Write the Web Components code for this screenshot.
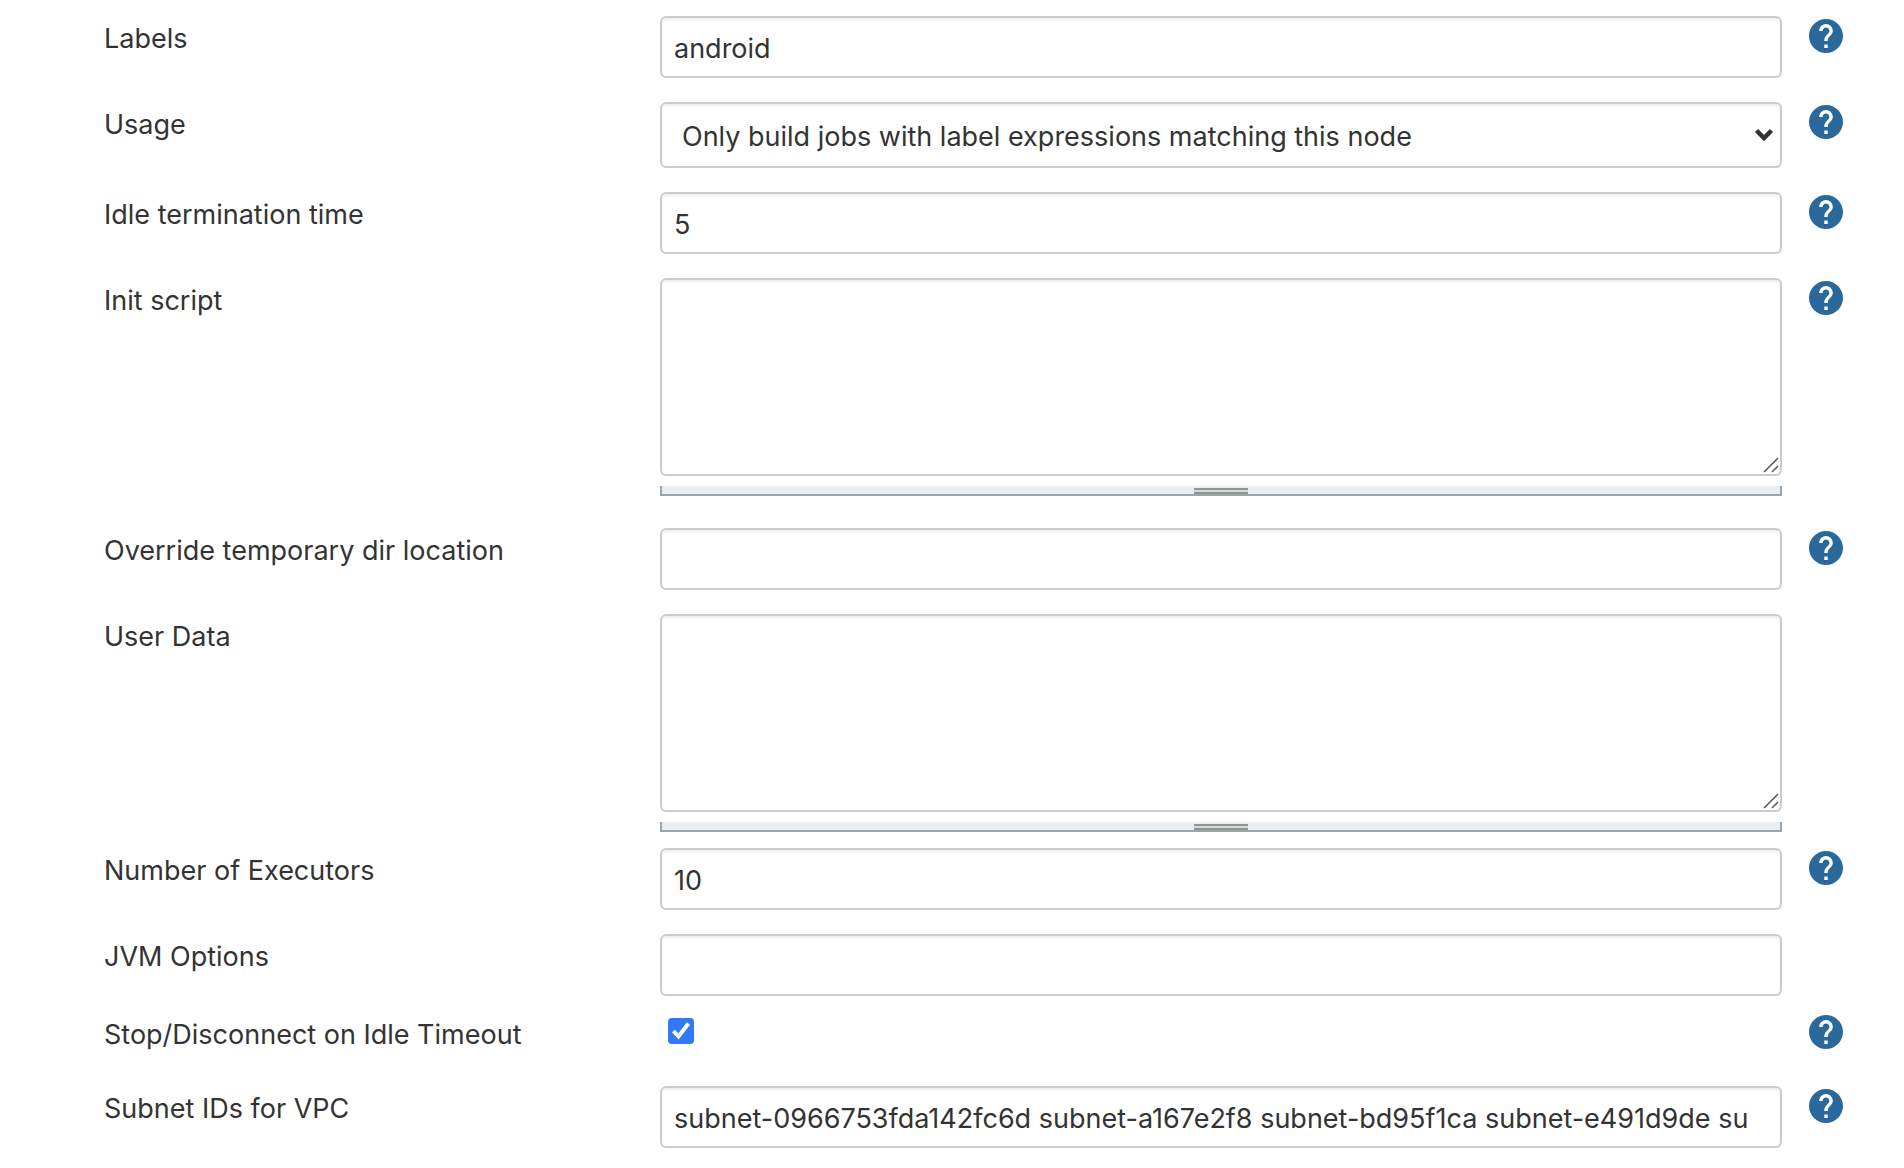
<!DOCTYPE html>
<html lang="en">
<head>
<meta charset="utf-8">
<title>Node configuration</title>
<style>
  body { margin: 0; background: #fff; color: #333; font: 27px/40px Inter, "Liberation Sans", sans-serif; }
</style>
</head>
<body>
<config-form>
  <text-row value="android" help>Labels</text-row>
  <select-row value="Only build jobs with label expressions matching this node" help>Usage</select-row>
  <text-row value="5" help>Idle termination time</text-row>
  <area-row help spaced>Init script</area-row>
  <text-row help>Override temporary dir location</text-row>
  <area-row>User Data</area-row>
  <text-row value="10" help>Number of Executors</text-row>
  <text-row tight>JVM Options</text-row>
  <check-row checked help>Stop/Disconnect on Idle Timeout</check-row>
  <text-row value="subnet-0966753fda142fc6d subnet-a167e2f8 subnet-bd95f1ca subnet-e491d9de su" help>Subnet IDs for VPC</text-row>
</config-form>

<script>
class ConfigForm extends HTMLElement {
  constructor() {
    super();
    this.attachShadow({ mode: 'open' }).innerHTML = `
      <style>
        :host { display: block; }
        form { display: flex; flex-direction: column; padding: 16px 61px 16px 104px; }
      </style>
      <form><slot></slot></form>`;
  }
}

class HelpLink extends HTMLElement {
  constructor() {
    super();
    this.attachShadow({ mode: 'open' }).innerHTML = `
      <style>
        :host { display: block; }
        a { display: block; width: 34px; height: 34px; color: #2b689c; }
        svg { display: block; width: 34px; height: 34px; }
      </style>
      <a href="#help" aria-label="Help">
        <svg viewBox="2 2 20 20" aria-hidden="true"><path fill="currentColor" d="M12 2C6.48 2 2 6.48 2 12s4.48 10 10 10 10-4.48 10-10S17.52 2 12 2zm1 17h-2v-2h2v2zm2.07-7.75l-.9.92C13.45 12.9 13 13.5 13 15h-2v-.5c0-1.1.45-2.1 1.17-2.83l1.24-1.26c.37-.36.59-.86.59-1.41 0-1.1-.9-2-2-2s-2 .9-2 2H8c0-2.21 1.79-4 4-4s4 1.79 4 4c0 .88-.36 1.68-.93 2.25z"/></svg>
      </a>`;
  }
}

/* Shared three-column row: label, control, help. */
class FormRow extends HTMLElement {
  connectedCallback() {
    if (this.shadowRoot) return;
    this.attachShadow({ mode: 'open' }).innerHTML = `
      <style>
        :host { display: grid; grid-template-columns: 556px minmax(0, 1fr) 34px; align-items: start; padding-bottom: 24px; }
        :host([tight]) { padding-bottom: 16px; }
        label { padding-top: 3px; }
        help-link { padding-top: 3px; }
        .control { position: relative; margin-right: 27px; }
        .box {
          display: block; box-sizing: border-box; width: 100%; margin: 0; padding: 2px 12px 0;
          border: 2px solid #ccc; border-radius: 6px; background: #fff;
          box-shadow: inset 0 2px 2px rgba(0, 0, 0, .075);
          font: inherit; color: inherit; outline: none;
        }
        ${this.styles}
      </style>
      <label for="control"><slot></slot></label>
      <div class="control">${this.control}</div>
      ${this.hasAttribute('help') ? '<help-link></help-link>' : ''}`;
    this.ready();
  }
  ready() {}
}

class TextRow extends FormRow {
  get styles() { return 'input { height: 62px; }'; }
  get control() { return '<input class="box" id="control" type="text">'; }
  ready() { this.shadowRoot.querySelector('input').value = this.getAttribute('value') || ''; }
}

class SelectRow extends FormRow {
  get styles() {
    return `
      .box { height: 66px; padding: 4px 40px 0 20px; appearance: none; }
      svg { position: absolute; right: 8px; top: 26px; width: 20px; height: 14px; pointer-events: none; }`;
  }
  get control() {
    return `<select class="box" id="control"><option>${this.getAttribute('value')}</option></select>
      <svg viewBox="0 0 20 14" aria-hidden="true"><path d="M2.5 2.5 10 10l7.500-7.500" fill="none" stroke="#333" stroke-width="4.500"/></svg>`;
  }
}

class AreaRow extends FormRow {
  get styles() {
    return `
      :host { padding-bottom: 16px; }
      :host([spaced]) { padding-bottom: 32px; }
      .box { height: 198px; padding: 12px; resize: none; }
      .corner { position: absolute; right: 3px; top: 179px; width: 16px; height: 16px; pointer-events: none; }
      .grip {
        box-sizing: border-box; height: 10px; margin-top: 10px; display: flex; justify-content: center;
        border: solid #9aa5ac; border-width: 0 2px 2px; background: #eaeef1;
      }
      .grip i { box-sizing: border-box; width: 54px; height: 6px; margin-top: 2px; border: solid #8f948f; border-width: 2px 0; background: #d8dbd8; }`;
  }
  get control() {
    return `<textarea class="box" id="control"></textarea>
      <svg class="corner" viewBox="0 0 16 16" aria-hidden="true"><path d="M1 15 15 1M9 15l6-6" stroke="#555" stroke-width="1.500" fill="none"/></svg>
      <div class="grip"><i></i></div>`;
  }
}

class CheckRow extends FormRow {
  get styles() {
    return `
      :host { min-height: 50px; }
      .control { padding: 6px 8px; display: flex; }
      input { appearance: none; width: 26px; height: 26px; margin: 0; border: 2px solid #888; border-radius: 4px; box-sizing: border-box; }
      input:checked { border: 0; background: #3079f8; }
      svg { position: absolute; left: 8px; top: 6px; width: 26px; height: 26px; pointer-events: none; }
      input:not(:checked) + svg { display: none; }`;
  }
  get control() {
    return `<input id="control" type="checkbox">
      <svg viewBox="0 0 26 26" aria-hidden="true"><path d="m5.500 13 5 5.500L20.500 5.500" fill="none" stroke="#fff" stroke-width="4"/></svg>`;
  }
  ready() { this.shadowRoot.querySelector('input').checked = this.hasAttribute('checked'); }
}

customElements.define('help-link', HelpLink);
customElements.define('text-row', TextRow);
customElements.define('select-row', SelectRow);
customElements.define('area-row', AreaRow);
customElements.define('check-row', CheckRow);
customElements.define('config-form', ConfigForm);
</script>
</body>
</html>
